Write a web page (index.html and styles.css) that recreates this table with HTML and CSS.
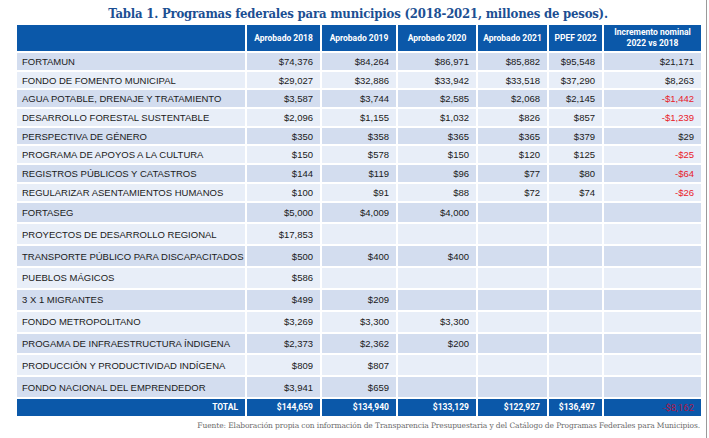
FILE: index.html
```html
<!DOCTYPE html>
<html lang="es">
<head>
<meta charset="utf-8">
<link rel="stylesheet" href="styles.css">
</head>
<body>
<div class="page">
  <h1 class="title">Tabla 1. Programas federales para municipios (2018-2021, millones de pesos).</h1>
  <table class="tbl">
    <colgroup>
      <col class="c-name"><col class="c-18"><col class="c-19"><col class="c-20"><col class="c-21"><col class="c-22"><col class="c-inc">
    </colgroup>
    <thead>
      <tr>
        <th></th><th>Aprobado 2018</th><th>Aprobado 2019</th><th>Aprobado 2020</th><th>Aprobado 2021</th><th>PPEF 2022</th><th>Incremento nominal<br>2022 vs 2018</th>
      </tr>
    </thead>
    <tbody>
      <tr class="s d"><td>FORTAMUN</td><td>$74,376</td><td>$84,264</td><td>$86,971</td><td>$85,882</td><td>$95,548</td><td>$21,171</td></tr>
      <tr class="s l"><td>FONDO DE FOMENTO MUNICIPAL</td><td>$29,027</td><td>$32,886</td><td>$33,942</td><td>$33,518</td><td>$37,290</td><td>$8,263</td></tr>
      <tr class="s d"><td>AGUA POTABLE, DRENAJE Y TRATAMIENTO</td><td>$3,587</td><td>$3,744</td><td>$2,585</td><td>$2,068</td><td>$2,145</td><td class="neg">-$1,442</td></tr>
      <tr class="s l"><td>DESARROLLO FORESTAL SUSTENTABLE</td><td>$2,096</td><td>$1,155</td><td>$1,032</td><td>$826</td><td>$857</td><td class="neg">-$1,239</td></tr>
      <tr class="s d"><td>PERSPECTIVA DE GÉNERO</td><td>$350</td><td>$358</td><td>$365</td><td>$365</td><td>$379</td><td>$29</td></tr>
      <tr class="s l"><td>PROGRAMA DE APOYOS A LA CULTURA</td><td>$150</td><td>$578</td><td>$150</td><td>$120</td><td>$125</td><td class="neg">-$25</td></tr>
      <tr class="s d"><td>REGISTROS PÚBLICOS Y CATASTROS</td><td>$144</td><td>$119</td><td>$96</td><td>$77</td><td>$80</td><td class="neg">-$64</td></tr>
      <tr class="s l"><td>REGULARIZAR ASENTAMIENTOS HUMANOS</td><td>$100</td><td>$91</td><td>$88</td><td>$72</td><td>$74</td><td class="neg">-$26</td></tr>
      <tr class="t d"><td>FORTASEG</td><td>$5,000</td><td>$4,009</td><td>$4,000</td><td></td><td></td><td></td></tr>
      <tr class="t l"><td>PROYECTOS DE DESARROLLO REGIONAL</td><td>$17,853</td><td></td><td></td><td></td><td></td><td></td></tr>
      <tr class="t d"><td>TRANSPORTE PÚBLICO PARA DISCAPACITADOS</td><td>$500</td><td>$400</td><td>$400</td><td></td><td></td><td></td></tr>
      <tr class="t l"><td>PUEBLOS MÁGICOS</td><td>$586</td><td></td><td></td><td></td><td></td><td></td></tr>
      <tr class="t d"><td>3 X 1 MIGRANTES</td><td>$499</td><td>$209</td><td></td><td></td><td></td><td></td></tr>
      <tr class="t l"><td>FONDO METROPOLITANO</td><td>$3,269</td><td>$3,300</td><td>$3,300</td><td></td><td></td><td></td></tr>
      <tr class="t d"><td>PROGAMA DE INFRAESTRUCTURA ÍNDIGENA</td><td>$2,373</td><td>$2,362</td><td>$200</td><td></td><td></td><td></td></tr>
      <tr class="t l"><td>PRODUCCIÓN Y PRODUCTIVIDAD INDÍGENA</td><td>$809</td><td>$807</td><td></td><td></td><td></td><td></td></tr>
      <tr class="t d"><td>FONDO NACIONAL DEL EMPRENDEDOR</td><td>$3,941</td><td>$659</td><td></td><td></td><td></td><td></td></tr>
    </tbody>
    <tfoot>
      <tr><td>TOTAL</td><td>$144,659</td><td>$134,940</td><td>$133,129</td><td>$122,927</td><td>$136,497</td><td class="tneg">-$8,162</td></tr>
    </tfoot>
  </table>
  <p class="source">Fuente: Elaboración propia con información de Transparencia Presupuestaria y del Catálogo de Programas Federales para Municipios.</p>
</div>
<div class="edge"></div>
</body>
</html>
```

FILE: styles.css
```css
html, body {
  margin: 0;
  padding: 0;
  background: #ffffff;
}
body {
  width: 709px;
  height: 438px;
  overflow: hidden;
  position: relative;
}
.page {
  padding: 0 9px 0 16px;
  width: 684px;
}
.title {
  margin: 0;
  padding-top: 5px;
  height: 20px;
  font-family: "DejaVu Serif", serif;
  font-stretch: condensed;
  font-weight: bold;
  font-size: 13px;
  line-height: 18px;
  color: #1c4f93;
  text-align: center;
  letter-spacing: -0.2px;
}
.tbl {
  border-collapse: collapse;
  table-layout: fixed;
  width: 686px;
  margin-left: -1px;
  font-family: "Liberation Sans", Arial, sans-serif;
  font-size: 9.5px;
  color: #1a1a1a;
}
.c-name { width: 230px; }
.c-18 { width: 75px; }
.c-19 { width: 76px; }
.c-20 { width: 80px; }
.c-21 { width: 71px; }
.c-22 { width: 55px; }
.c-inc { width: 99px; }
.tbl th, .tbl td {
  border: 2px solid #ffffff;
  padding: 0 7px 0 5px;
  white-space: nowrap;
  overflow: hidden;
}
.tbl thead th {
  background: #0b58a9;
  color: #ffffff;
  font-family: Roboto, "Open Sans", sans-serif;
  font-weight: bold;
  font-size: 8.5px;
  line-height: 11px;
  height: 26px;
  text-align: center;
  padding: 0 2px;
  border-top: 0;
}
.tbl tbody td { text-align: right; }
.tbl tbody td:first-child { text-align: left; }
.tbl tr.s td { height: 16.7px; }
.tbl tr.t td { height: 19.85px; }
.tbl tr.d td { background: #d3ddef; }
.tbl tr.l td { background: #e8eef8; }
.tbl td.neg { color: #e8202a; }
.tbl tfoot td {
  background: #0b58a9;
  color: #ffffff;
  font-family: Roboto, "Open Sans", sans-serif;
  font-weight: bold;
  font-size: 8.5px;
  height: 16.5px;
  text-align: right;
}
.tbl tfoot td.tneg { color: #a8184a; font-weight: normal; font-size: 9.5px; }
.source {
  margin: 3px 0 0 0;
  font-family: "DejaVu Serif", serif;
  font-size: 7.5px;
  color: #6a6a6a;
  text-align: right;
  letter-spacing: -0.1px;
}
.edge {
  position: absolute;
  top: 0;
  left: 706px;
  width: 1px;
  height: 438px;
  background: #9a9a9a;
}
```
